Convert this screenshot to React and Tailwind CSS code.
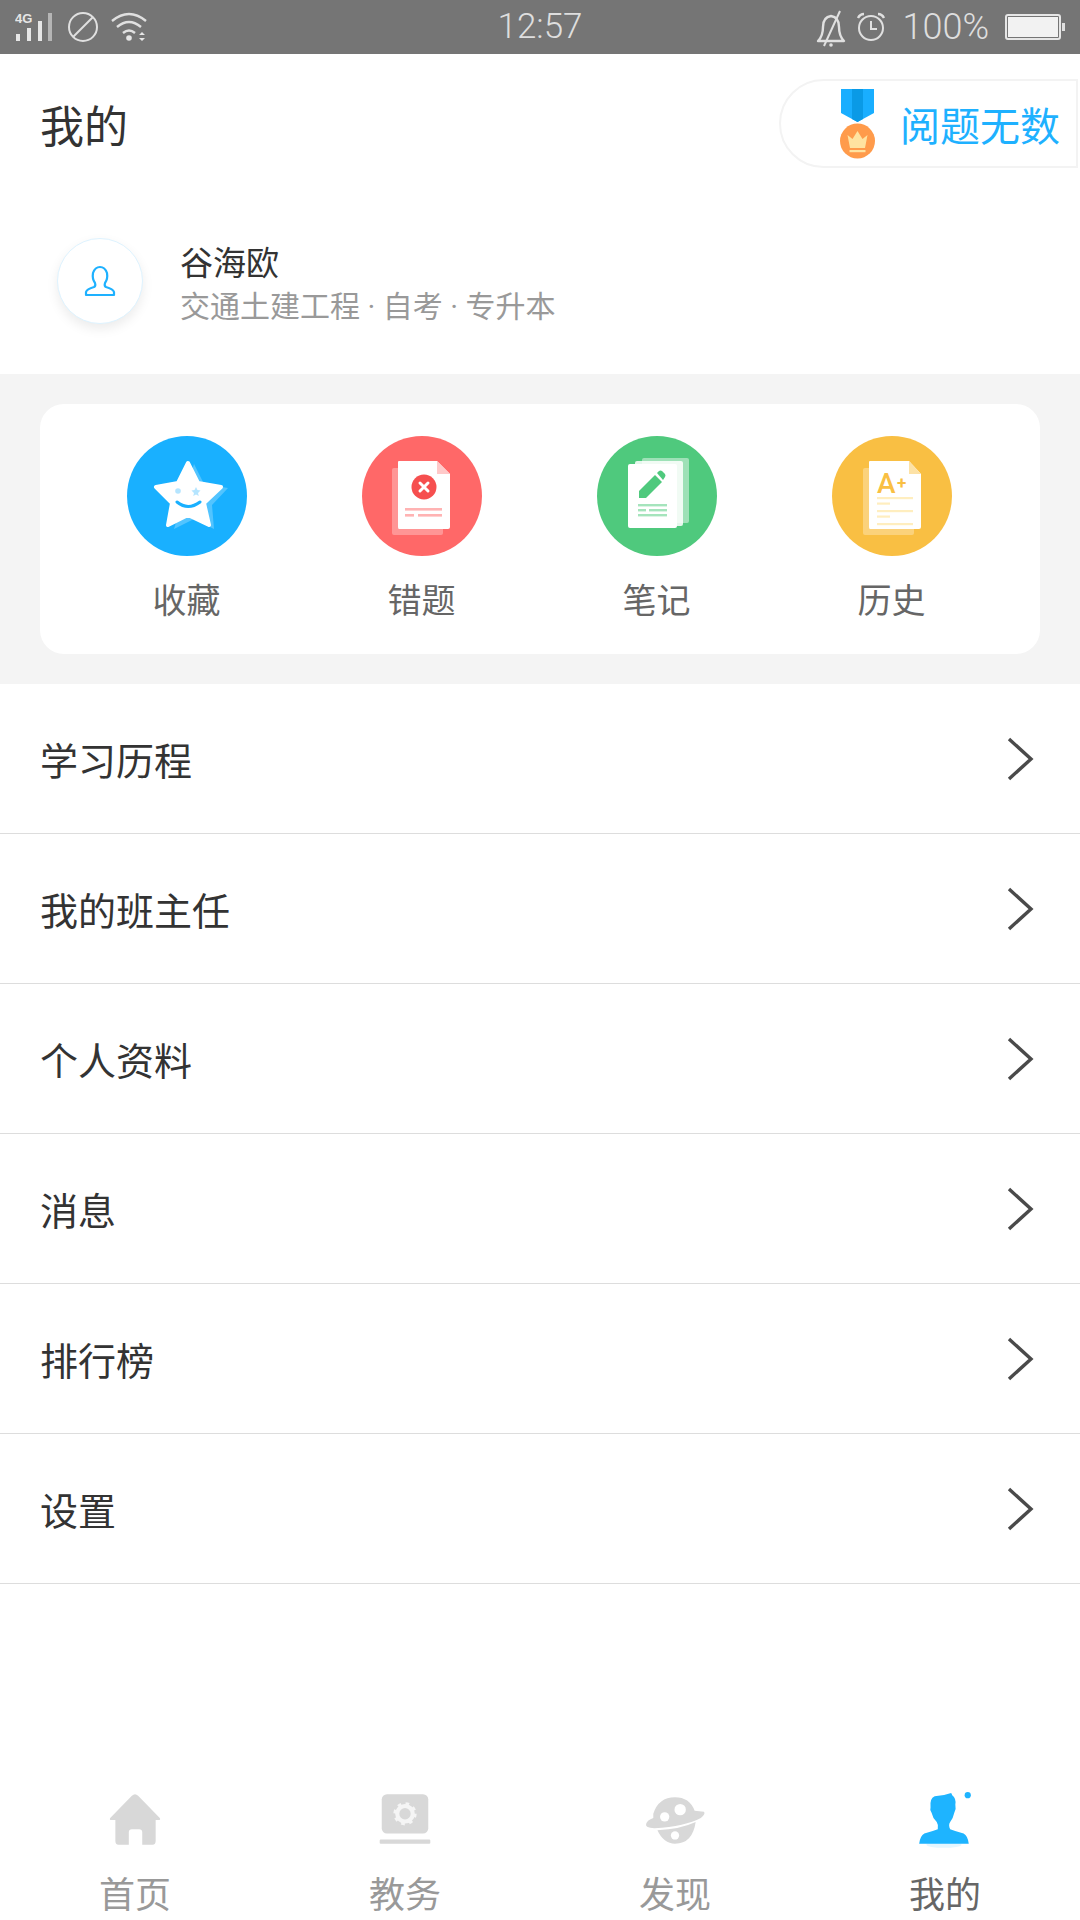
import React from 'react';

const cjk = "font-['Noto_Sans_CJK_SC','Noto_Sans',sans-serif]";

const StatusBar = () => (
  <div className="grid grid-cols-3 items-center h-[54px] bg-[#757575] text-[#dedede] font-['Roboto',sans-serif] font-light text-[35px] shrink-0">
    <div className="flex items-center pl-[15px]">
      <svg width="140" height="54" viewBox="0 0 140 54">
        <text x="0" y="23" fontSize="13" fontWeight="700" fill="#e6e6e6" fontFamily="Liberation Sans">4G</text>
        <rect x="1" y="34" width="4" height="7" fill="#e6e6e6" />
        <rect x="12" y="28" width="4" height="13" fill="#e6e6e6" />
        <rect x="23" y="21" width="4" height="20" fill="#e6e6e6" />
        <rect x="33" y="13" width="4" height="28" fill="#b5b5b5" />
        <circle cx="68" cy="27" r="14" fill="none" stroke="#e0e0e0" strokeWidth="2" />
        <path d="M58 37 L78 17" stroke="#e0e0e0" strokeWidth="2" />
        <path d="M97 21 Q114 7 131 21 M102 27 Q114 17 126 27 M108 33 Q114 28 120 33" fill="none" stroke="#e0e0e0" strokeWidth="2.4" />
        <circle cx="114" cy="38" r="2.8" fill="#e6e6e6" />
        <path d="M124 35 L127 32 L130 35 Z M124 38 L130 38 L127 41 Z" fill="#e6e6e6" />
      </svg>
    </div>
    <div className="text-center">12:57</div>
    <div className="flex items-center justify-end">
      <svg width="30" height="40" viewBox="0 0 30 40" className="mr-[10px]">
        <path d="M2 34 Q7 29 7 20 Q7 10 15 9 Q23 10 23 20 Q23 29 28 34 Z" fill="none" stroke="#e0e0e0" strokeWidth="2.4" strokeLinejoin="round" />
        <path d="M8 39 L24 4" stroke="#e0e0e0" strokeWidth="2" />
        <circle cx="15" cy="38" r="1.8" fill="#e0e0e0" />
      </svg>
      <svg width="30" height="30" viewBox="0 0 30 30" className="mr-[16px]">
        <circle cx="15" cy="16" r="12" fill="none" stroke="#e0e0e0" strokeWidth="2" />
        <path d="M15 9 V17 H21" fill="none" stroke="#e0e0e0" strokeWidth="2" />
        <path d="M2 6 Q4 2 8 2 M28 6 Q26 2 22 2" fill="none" stroke="#e0e0e0" strokeWidth="2.4" />
      </svg>
      <span className="leading-none text-[36px]">100%</span>
      <div className="flex items-center ml-[16px] mr-[15px]">
        <div className="w-[56px] h-[26px] border-2 border-[#e6e6e6] rounded-[3px] p-[1px]">
          <div className="w-full h-full bg-[#f2f2f2]" />
        </div>
        <div className="w-[3px] h-[8px] bg-[#e0e0e0] ml-[1px]" />
      </div>
    </div>
  </div>
);

const Medal = () => (
  <svg width="36" height="70" viewBox="0 0 36 70">
    <path d="M1 0 H34 V24 L17.5 33 L1 24 Z" fill="#19aeff" />
    <path d="M12 0 H23 V30 L17.5 33 L12 30 Z" fill="#0a9ae6" />
    <circle cx="17.5" cy="52" r="17.5" fill="#ff9b4b" />
    <path d="M7.5 46 L12.5 50 L17.5 42 L22.5 50 L27.5 46 L25 59 H10 Z" fill="#ffe3a0" />
    <rect x="9.5" y="61" width="16" height="2.2" fill="#ffe3a0" />
  </svg>
);

const Header = () => (
  <div className="flex items-center justify-between h-[124px] pl-[40px] pt-[15px] shrink-0">
    <h1 className="text-[44px] text-[#333333] font-normal leading-none">我的</h1>
    <div className="flex items-center h-[89px] w-[299px] border-2 border-[#f3f3f3] rounded-l-[45px] pl-[59px] gap-[24px] mr-[2px]">
      <Medal />
      <span className="text-[40px] text-[#1eb1ff] leading-none whitespace-nowrap">阅题无数</span>
    </div>
  </div>
);

const Profile = () => (
  <div className="flex items-center h-[196px] pl-[57px] pt-[10px] shrink-0">
    <div className="flex items-center justify-center w-[86px] h-[86px] rounded-full bg-white border border-[#def3ff] shadow-[0_5px_12px_rgba(0,0,0,0.08)]">
      <svg width="32" height="32" viewBox="0 0 32 32" fill="none" stroke="#1eb1ff" strokeWidth="2.2" strokeLinejoin="round">
        <path d="M2 30 V27 Q3 24 10 22 Q12 21 11 18 Q8 14 9 8 Q11 2 16 2 Q21 2 23 8 Q24 14 21 18 Q20 21 22 22 Q29 24 30 27 V30 Z" />
      </svg>
    </div>
    <div className="ml-[37px] pt-[6px]">
      <div className="text-[33px] text-[#333333] leading-[40px]">谷海欧</div>
      <div className="text-[30px] text-[#999999] leading-[40px] mt-[6px] font-['Roboto','Noto_Sans_CJK_SC',sans-serif]">交通土建工程 · 自考 · 专升本</div>
    </div>
  </div>
);

const StarIcon = () => (
  <svg width="120" height="120" viewBox="0 0 120 120">
    <circle cx="60" cy="60" r="60" fill="#19b0ff" />
    <path d="M67 28 L77 48 L101 52 L85 69 L87 93 L67 83 L47 93 Z" fill="#fff" opacity="0.25" />
    <path d="M61 27 L71 47 L94 51 L77 67 L82 89 L61 79 L41 89 L45 67 L29 51 L51 47 Z" fill="#fff" stroke="#fff" strokeWidth="4" strokeLinejoin="round" />
    <circle cx="51" cy="55" r="2.8" fill="#b5e5ff" />
    <path d="M69 51 L70.5 54 L73.5 54.5 L71 57 L71.8 60 L69 58.5 L66.2 60 L67 57 L64.5 54.5 L67.5 54 Z" fill="#b5e5ff" />
    <path d="M50 66 Q61 75 73 66" fill="none" stroke="#19b0ff" strokeWidth="3" strokeLinecap="round" />
  </svg>
);

const WrongIcon = () => (
  <svg width="120" height="120" viewBox="0 0 120 120">
    <circle cx="60" cy="60" r="60" fill="#ff6868" />
    <rect x="30" y="32" width="51" height="67" rx="2" fill="#fff" opacity="0.3" />
    <path d="M37 25 H75 L88 38 V91 Q88 93 86 93 H37 Q36 93 36 91 V26 Q36 25 37 25 Z" fill="#fff" />
    <path d="M75 25 L88 38 H75 Z" fill="#ffc9c9" />
    <circle cx="62" cy="51" r="12.5" fill="#f64f4f" />
    <path d="M58 47 L66 55 M66 47 L58 55" stroke="#fff" strokeWidth="3" strokeLinecap="round" />
    <rect x="43" y="72" width="37" height="2.6" fill="#ffb3b3" />
    <rect x="43" y="78" width="9" height="2.6" fill="#ffb3b3" />
    <rect x="56" y="78" width="24" height="2.6" fill="#ffb3b3" />
  </svg>
);

const NoteIcon = () => (
  <svg width="120" height="120" viewBox="0 0 120 120">
    <circle cx="60" cy="60" r="60" fill="#4fc97d" />
    <rect x="45" y="22" width="47" height="65" rx="2" fill="#fff" opacity="0.45" />
    <rect x="38" y="25" width="48" height="65" rx="2" fill="#fff" opacity="0.85" />
    <rect x="31" y="28" width="49" height="64" rx="2" fill="#fff" />
    <path d="M42 62 V55 L58 39 L65 46 L49 62 Z" fill="#4fc97d" />
    <path d="M60 37 L62 35 Q63.5 34 65 35 L68 38 Q69 39.5 68 41 L66 44 Z" fill="#4fc97d" />
    <rect x="41" y="68" width="29" height="2.4" fill="#a5e4bc" />
    <rect x="41" y="73" width="8" height="2.4" fill="#a5e4bc" />
    <rect x="52" y="73" width="18" height="2.4" fill="#a5e4bc" />
    <rect x="41" y="78" width="29" height="2.4" fill="#a5e4bc" />
  </svg>
);

const HistoryIcon = () => (
  <svg width="120" height="120" viewBox="0 0 120 120">
    <circle cx="60" cy="60" r="60" fill="#f9bf43" />
    <rect x="31" y="32" width="51" height="67" rx="2" fill="#fff" opacity="0.3" />
    <path d="M38 25 H77 L89 38 V91 Q89 93 87 93 H38 Q37 93 37 91 V26 Q37 25 38 25 Z" fill="#fff" />
    <path d="M77 25 L89 38 H77 Z" fill="#fde2a6" />
    <text x="45" y="56.5" fontSize="28" fontWeight="500" fill="#f9bf43" fontFamily="Roboto">A</text>
    <text x="65" y="53" fontSize="17" fontWeight="700" fill="#f9bf43" fontFamily="Roboto">+</text>
    <rect x="45" y="61" width="36" height="2.2" fill="#ffeebf" />
    <rect x="45" y="66.5" width="13" height="2.2" fill="#ffeebf" />
    <rect x="45" y="74" width="36" height="2.2" fill="#ffeebf" />
    <rect x="45" y="79.5" width="13" height="2.2" fill="#ffeebf" />
    <rect x="45" y="87" width="36" height="2.2" fill="#ffeebf" />
  </svg>
);

const shortcuts = [
  { label: '收藏', icon: <StarIcon /> },
  { label: '错题', icon: <WrongIcon /> },
  { label: '笔记', icon: <NoteIcon /> },
  { label: '历史', icon: <HistoryIcon /> },
];

const Shortcuts = () => (
  <div className="bg-[#f4f4f4] px-[40px] py-[30px] shrink-0">
    <div className="grid grid-cols-4 h-[250px] bg-white rounded-[24px] pl-[29px] pr-[31px] pt-[32px]">
      {shortcuts.map((item) => (
        <div key={item.label} className="flex flex-col items-center">
          {item.icon}
          <span className="mt-[21px] text-[34px] leading-[44px] text-[#666666]">{item.label}</span>
        </div>
      ))}
    </div>
  </div>
);

const rows = ['学习历程', '我的班主任', '个人资料', '消息', '排行榜', '设置'];

const MenuList = () => (
  <div className="shrink-0">
    {rows.map((row) => (
      <div key={row} className="flex items-center justify-between h-[150px] border-b border-[#dddddd] pl-[40px] pr-[46px]">
        <span className="text-[38px] text-[#333333] leading-none">{row}</span>
        <svg width="28" height="44" viewBox="0 0 28 44" fill="none" stroke="#4a4a4a" strokeWidth="3.4">
          <path d="M3 2 L25 22 L3 42" />
        </svg>
      </div>
    ))}
  </div>
);

const tabs = [
  {
    label: '首页',
    icon: (
      <svg width="62" height="62" viewBox="0 0 60 60" fill="#d8d8d8">
        <path d="M30 4 Q31.5 4 33 5.5 L54 27 Q55 29 53 29 H50 V49 Q50 53 47 53 H37 V41 Q37 38 34 38 H27 Q24 38 24 41 V53 H14 Q11 53 11 49 V29 H7 Q5 29 6 27 L27 5.5 Q28.5 4 30 4 Z" />
      </svg>
    ),
  },
  {
    label: '教务',
    icon: (
      <svg width="62" height="62" viewBox="0 0 60 60">
        <rect x="7.5" y="4" width="45" height="38" rx="5" fill="#d8d8d8" />
        <rect x="5.5" y="48" width="49" height="4" rx="1" fill="#d8d8d8" />
        <circle cx="30" cy="23" r="7.5" fill="none" stroke="#f5f5f5" strokeWidth="4" />
        <circle cx="30" cy="23" r="10" fill="none" stroke="#f5f5f5" strokeWidth="2.5" strokeDasharray="3.5 4.4" />
      </svg>
    ),
  },
  {
    label: '发现',
    icon: (
      <svg width="62" height="62" viewBox="0 0 60 60" fill="#d8d8d8">
        <path d="M9 23 Q14 7 30 7 Q44 7 49 20 L58 21 Q60 23 55 27 Q40 35 10 37 Q1 37 2 33 Q3 29 9 27 Z" />
        <path d="M13 39 Q35 38 50 31 Q47 52 30 52 Q19 52 13 39 Z" />
        <circle cx="35" cy="19" r="5.5" fill="#fff" />
        <circle cx="20" cy="26" r="4.5" fill="#fff" />
        <circle cx="30" cy="44" r="4" fill="#fff" />
      </svg>
    ),
  },
  {
    label: '我的',
    active: true,
    icon: (
      <svg width="62" height="62" viewBox="0 0 60 60">
        <path d="M5 52 Q6 44 10 42 Q18 40 23 38 Q24 34 22 31 Q18 27 17 22 Q15 20 16 17 Q15 8 20 6 Q28 6 36 3 L37 5 Q41 8 40 14 Q41 18 39 22 Q38 27 35 31 Q33 34 35 38 Q40 40 48 42 Q52 44 53 52 Z" fill="#1eb4ff" />
        <ellipse cx="29" cy="53" rx="17" ry="3" fill="#1eb4ff" opacity="0.12" />
        <circle cx="52" cy="5" r="3" fill="#1eb4ff" />
      </svg>
    ),
  },
];

const TabBar = () => (
  <div className="grid grid-cols-4 mt-auto h-[130px] shrink-0">
    {tabs.map((tab) => (
      <div key={tab.label} className="flex flex-col items-center">
        {tab.icon}
        <span className={`mt-[20px] text-[36px] leading-[40px] ${tab.active ? 'text-[#666666]' : 'text-[#999999]'}`}>
          {tab.label}
        </span>
      </div>
    ))}
  </div>
);

const App = () => {
  return (
    <div className={`flex flex-col h-[1920px] w-[1080px] overflow-hidden bg-white ${cjk}`}>
      <StatusBar />
      <Header />
      <Profile />
      <Shortcuts />
      <MenuList />
      <TabBar />
    </div>
  );
};

export default App;
